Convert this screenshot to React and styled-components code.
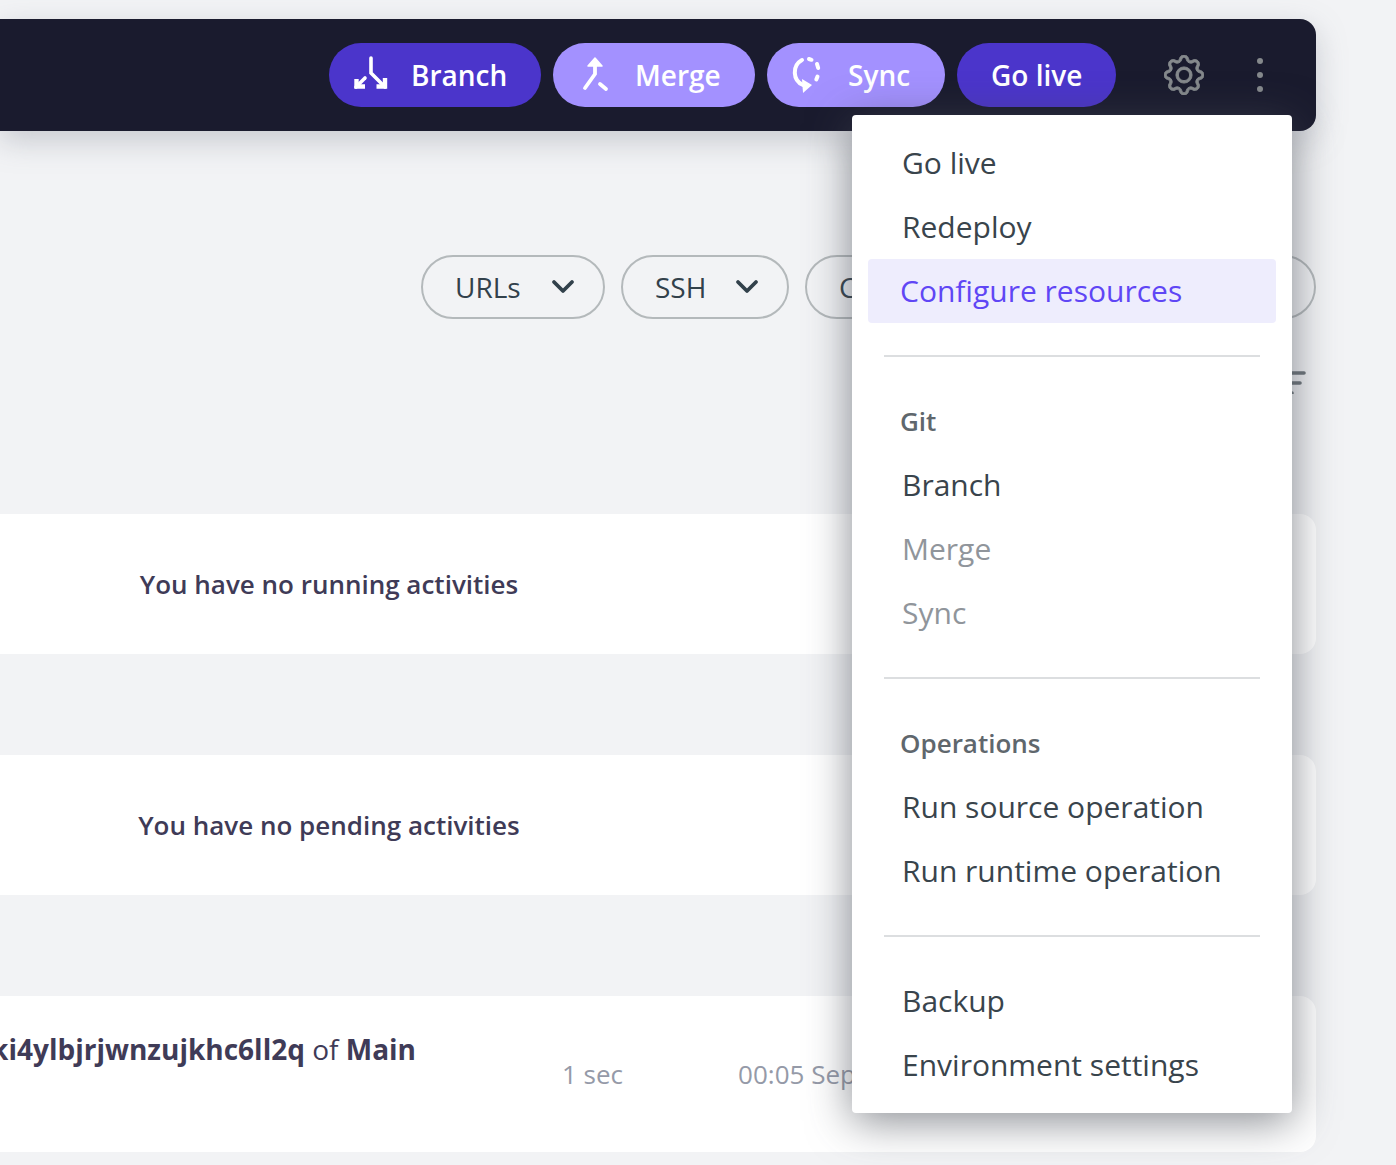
import React from 'react';
import styled, { createGlobalStyle } from 'styled-components';
import { BsGear } from 'react-icons/bs';

const GlobalStyle = createGlobalStyle`
  html, body {
    margin: 0;
    padding: 0;
    background: #f2f3f5;
    font-family: "Open Sans", "Liberation Sans", sans-serif;
    overflow: hidden;
  }
`;

const Page = styled.div`
  position: relative;
  width: 1396px;
  height: 1165px;
  padding: 19px 80px 0 0;
  box-sizing: border-box;
  overflow: hidden;
`;

const Header = styled.header`
  height: 112px;
  background: #1a1b2e;
  border-radius: 0 16px 16px 0;
  box-shadow: 0 10px 30px rgba(120, 125, 140, 0.35);
  display: flex;
  align-items: center;
  justify-content: flex-end;
  gap: 12px;
  padding-right: 53px;
`;

const ActionButton = styled.button`
  height: 64px;
  width: ${(p) => p.$width}px;
  border: 0;
  border-radius: 32px;
  padding: 0 0 0 ${(p) => p.$pad}px;
  background: ${(p) => (p.$muted ? '#a391ff' : '#4b35cb')};
  color: #fff;
  font: 600 28px "Open Sans", sans-serif;
  display: flex;
  align-items: center;
  gap: ${(p) => p.$gap}px;
  flex: none;
`;

const GearSlot = styled.div`
  margin-left: 34px;
  width: 44px;
  height: 44px;
  display: flex;
  align-items: center;
  justify-content: center;
  color: #85898c;
  svg {
    stroke: currentColor;
    stroke-width: 0.36px;
  }
`;

const Dots = styled.div`
  margin-left: 39px;
  display: flex;
  flex-direction: column;
  gap: 8px;
  span {
    width: 6px;
    height: 6px;
    border-radius: 50%;
    background: #85898c;
  }
`;

const Toolbar = styled.div`
  margin-top: 124px;
  display: flex;
  justify-content: flex-end;
  gap: 16px;
`;

const Pill = styled.div`
  height: 64px;
  width: ${(p) => p.$width}px;
  box-sizing: border-box;
  border: 2px solid #b4b9bb;
  border-radius: 32px;
  padding: 0 28px 0 32px;
  display: flex;
  align-items: center;
  justify-content: space-between;
  color: #32414b;
  font-size: 28px;
  font-weight: 500;
`;

const FilterRow = styled.div`
  margin-top: 51px;
  height: 24px;
  display: flex;
  justify-content: flex-end;
  padding-right: 10px;
`;

const Card = styled.section`
  margin-top: ${(p) => p.$top}px;
  height: ${(p) => p.$height}px;
  background: #fff;
  border-radius: 0 16px 16px 0;
  display: flex;
`;

const EmptyText = styled.p`
  margin: 0;
  width: 658px;
  align-self: center;
  text-align: center;
  color: #3f3b57;
  font-size: 26px;
  font-weight: 600;
`;

const ActivityTitle = styled.div`
  width: 416px;
  flex: none;
  display: flex;
  justify-content: flex-end;
  overflow: hidden;
  white-space: pre;
  padding-top: 33px;
  color: #3f3b57;
  font-size: 28px;
  line-height: 40px;
  b {
    font-weight: 700;
  }
`;

const Meta = styled.span`
  margin-left: ${(p) => p.$left}px;
  padding-top: 59px;
  color: #959aa8;
  font-size: 26px;
  line-height: 38px;
  white-space: nowrap;
`;

const Menu = styled.nav`
  position: absolute;
  left: 852px;
  top: 115px;
  width: 440px;
  box-sizing: border-box;
  padding: 16px;
  background: #fff;
  border-radius: 4px;
  box-shadow: 0 8px 44px rgba(70, 76, 84, 0.65);
`;

const MenuItem = styled.div`
  height: 62px;
  padding: 0 0 2px ${(p) => (p.$active ? 32 : 34)}px;
  display: flex;
  align-items: center;
  border-radius: 4px;
  font-size: 30px;
  color: ${(p) => (p.$active ? '#5f46f5' : p.$disabled ? '#90959b' : '#39444c')};
  background: ${(p) => (p.$active ? '#eeedfd' : 'transparent')};
`;

const MenuHeading = styled.div`
  height: 64px;
  padding-left: 32px;
  display: flex;
  align-items: center;
  font-size: 26px;
  font-weight: 600;
  color: #5f676d;
`;

const Divider = styled.hr`
  margin: 32px 16px;
  border: 0;
  height: 2px;
  background: #dcdee0;
`;

const BranchIcon = () => (
  <svg width="40" height="40" viewBox="0 0 40 40" fill="none" stroke="#fff" strokeWidth="3.6" strokeLinecap="round">
    <path d="M19 3v15l14 14" />
    <path d="M13 23 4 32" />
    <path d="M4.500 24v7.500H13M33 23v8.500h-8.500" strokeLinecap="butt" strokeWidth="4.4" />
  </svg>
);

const MergeIcon = () => (
  <svg width="36" height="40" viewBox="0 0 36 40" fill="none" stroke="#fff" strokeWidth="3.8" strokeLinecap="round">
    <path d="M17 8v11L7 33" />
    <path d="M10 11 17 3l7 8z" fill="#fff" strokeWidth="1.5" strokeLinejoin="round" />
    <path d="m22 29 6 5" />
  </svg>
);

const SyncIcon = () => (
  <svg width="36" height="40" viewBox="0 0 36 40" fill="none" stroke="#fff" strokeWidth="4" strokeLinecap="round">
    <path d="M12 5A14 14 0 0 0 13 30" />
    <path d="M12 24l10 6-9 8z" fill="#fff" stroke="none" />
    <path d="M19 4l2.500 .8M27 9l1.200 4M27.500 21.500l-1.200 3" />
  </svg>
);

const Chevron = () => (
  <svg width="24" height="16" viewBox="0 0 24 16" fill="none" stroke="#32414b" strokeWidth="3.8" strokeLinecap="round" strokeLinejoin="round">
    <path d="m3 3 9 9 9-9" />
  </svg>
);

const FilterIcon = () => (
  <svg width="32" height="24" viewBox="0 0 32 24" fill="none" stroke="#6c7479" strokeWidth="3.6" strokeLinecap="round">
    <path d="M2 3h28M8 13h18M14 23h4" />
  </svg>
);

function App() {
  return (
    <Page>
      <GlobalStyle />
      <Header>
        <ActionButton $width={212} $pad={23} $gap={19}>
          <BranchIcon />
          Branch
        </ActionButton>
        <ActionButton $width={202} $pad={25} $gap={21} $muted>
          <MergeIcon />
          Merge
        </ActionButton>
        <ActionButton $width={178} $pad={23} $gap={22} $muted>
          <SyncIcon />
          Sync
        </ActionButton>
        <ActionButton $width={159} $pad={34} $gap={0}>
          Go live
        </ActionButton>
        <GearSlot>
          <BsGear size={40} />
        </GearSlot>
        <Dots>
          <span />
          <span />
          <span />
        </Dots>
      </Header>

      <Toolbar>
        <Pill $width={184}>
          URLs
          <Chevron />
        </Pill>
        <Pill $width={168}>
          SSH
          <Chevron />
        </Pill>
        <Pill $width={511}>Code</Pill>
      </Toolbar>

      <FilterRow>
        <FilterIcon />
      </FilterRow>

      <Card $top={120} $height={140}>
        <EmptyText>You have no running activities</EmptyText>
      </Card>
      <Card $top={101} $height={140}>
        <EmptyText>You have no pending activities</EmptyText>
      </Card>
      <Card $top={101} $height={156}>
        <ActivityTitle>
          <span>
            <b>ki4ylbjrjwnzujkhc6ll2q</b> of <b>Main</b>
          </span>
        </ActivityTitle>
        <Meta $left={146}>1 sec</Meta>
        <Meta $left={115}>00:05 Sep</Meta>
      </Card>

      <Menu>
        <MenuItem>Go live</MenuItem>
        <MenuItem>Redeploy</MenuItem>
        <MenuItem $active>Configure resources</MenuItem>
        <Divider />
        <MenuHeading>Git</MenuHeading>
        <MenuItem>Branch</MenuItem>
        <MenuItem $disabled>Merge</MenuItem>
        <MenuItem $disabled>Sync</MenuItem>
        <Divider />
        <MenuHeading>Operations</MenuHeading>
        <MenuItem>Run source operation</MenuItem>
        <MenuItem>Run runtime operation</MenuItem>
        <Divider />
        <MenuItem>Backup</MenuItem>
        <MenuItem>Environment settings</MenuItem>
      </Menu>
    </Page>
  );
}

export default App;
